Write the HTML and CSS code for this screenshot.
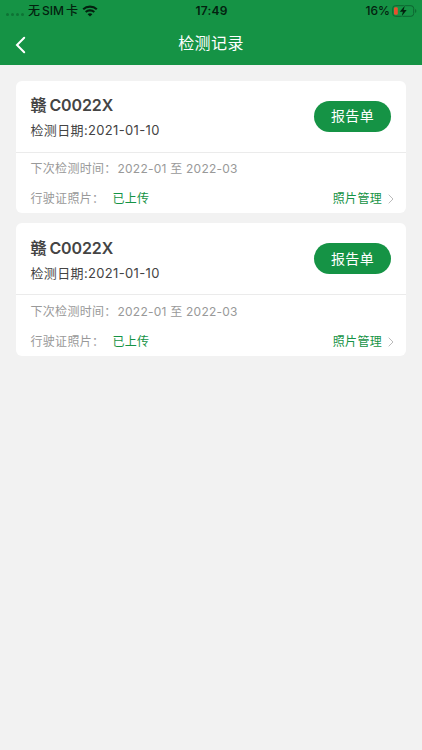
FILE: index.html
```html
<!DOCTYPE html>
<html lang="zh-CN">
<head>
    <meta charset="UTF-8">
    <meta name="viewport" content="width=device-width, initial-scale=1.0">
    <title>检测记录</title>
    <link rel="stylesheet" href="styles.css">
</head>
<body>
    <header class="header">
        <div class="status-bar">
            <div class="status-left">
                <span class="signal"><i></i><i></i><i></i><i></i></span>
                <span class="carrier"><span>无</span><span>SIM</span><span>卡</span></span>
                <svg class="wifi" width="16" height="12" viewBox="0 0 16 12">
                    <path d="M1.2 4.3C5 .7 11 .7 14.8 4.3M3.7 7.1c2.4-2.3 6.2-2.3 8.6 0" fill="none" stroke="#03210f" stroke-width="2.1"/>
                    <path d="M8 11.6 5.6 9.2c1.3-1.3 3.5-1.3 4.8 0z" fill="#03210f"/>
                </svg>
            </div>
            <span class="time">17:49</span>
            <div class="status-right">
                <span class="percent">16%</span>
                <svg class="battery" width="25" height="12" viewBox="0 0 25 12">
                    <rect x=".7" y=".7" width="21" height="10.6" rx="2.8" fill="none" stroke="#0d6430"/>
                    <path d="M23.2 4v4c1.5-.6 1.5-3.4 0-4z" fill="#0d6430"/>
                    <rect x="2" y="2.2" width="3.8" height="7.6" rx="1.2" fill="#e8502f"/>
                    <path d="M12.8.8 7.8 6.7h3.1l-1.2 4.5 5-6.1h-3.1z" fill="#03210f" stroke="#159345" stroke-width="1.6" paint-order="stroke"/>
                </svg>
            </div>
        </div>
        <nav class="nav-bar">
            <a class="back" href="#" aria-label="返回">
                <svg width="11" height="18" viewBox="0 0 11 18">
                    <path d="M9.2 1.8 2 9l7.2 7.2" fill="none" stroke="#fff" stroke-width="2" stroke-linecap="round"/>
                </svg>
            </a>
            <h1>检测记录</h1>
        </nav>
    </header>

    <main class="list">
        <section class="card">
            <div class="card-top">
                <div class="car-info">
                    <h2><span>赣</span>C0022X</h2>
                    <p class="date">检测日期:2021-01-10</p>
                </div>
                <button class="report-button">报告单</button>
            </div>
            <div class="card-bottom">
                <div class="row">
                    <span class="label">下次检测时间：</span>
                    <span class="range">2022-01 至 2022-03</span>
                </div>
                <div class="row">
                    <span class="label">行驶证照片：</span>
                    <span class="uploaded">已上传</span>
                    <a class="manage" href="#">照片管理
                        <svg width="6" height="10" viewBox="0 0 6 10"><path d="M.7.7 5 5 .7 9.3" fill="none" stroke="#bbb"/></svg>
                    </a>
                </div>
            </div>
        </section>

        <section class="card">
            <div class="card-top">
                <div class="car-info">
                    <h2><span>赣</span>C0022X</h2>
                    <p class="date">检测日期:2021-01-10</p>
                </div>
                <button class="report-button">报告单</button>
            </div>
            <div class="card-bottom">
                <div class="row">
                    <span class="label">下次检测时间：</span>
                    <span class="range">2022-01 至 2022-03</span>
                </div>
                <div class="row">
                    <span class="label">行驶证照片：</span>
                    <span class="uploaded">已上传</span>
                    <a class="manage" href="#">照片管理
                        <svg width="6" height="10" viewBox="0 0 6 10"><path d="M.7.7 5 5 .7 9.3" fill="none" stroke="#bbb"/></svg>
                    </a>
                </div>
            </div>
        </section>
    </main>
</body>
</html>
```
FILE: styles.css
```css
* {
    box-sizing: border-box;
}

body {
    margin: 0;
    min-height: 100vh;
    background-color: #f2f2f2;
    font-family: Inter, "Noto Sans CJK SC", sans-serif;
    color: #444;
}

a {
    text-decoration: none;
}

/* Header */
.header {
    height: 65.4px;
    background-color: #159345;
}

.status-bar {
    display: grid;
    grid-template-columns: 1fr auto 1fr;
    align-items: center;
    height: 21px;
    padding: 0 5px 0 6px;
    font-size: 12px;
    font-weight: 500;
    line-height: 20px;
    color: #03210f;
}

.status-left,
.status-right {
    display: flex;
    align-items: center;
}

.status-right {
    justify-content: flex-end;
    gap: 2px;
}

.signal {
    display: flex;
    gap: 2px;
    margin: 7px 4px 0 0;
}

.signal i {
    width: 3px;
    height: 3px;
    border-radius: 50%;
    background-color: #0e7335;
}

.carrier {
    display: flex;
    gap: 2px;
}

.wifi {
    margin-left: 4px;
}

.time {
    font-weight: 600;
    letter-spacing: 0.2px;
}

.nav-bar {
    display: grid;
    grid-template-columns: 1fr auto 1fr;
    align-items: center;
    height: 44px;
    padding: 0 15px;
}

.back {
    display: flex;
    padding-top: 3px;
}

.nav-bar h1 {
    margin: 0;
    font-size: 16px;
    font-weight: 400;
    line-height: 24px;
    letter-spacing: 0.4px;
    color: #fff;
}

/* Record cards */
.list {
    display: flex;
    flex-direction: column;
    gap: 10px;
    padding: 15.6px 16px 0 15.5px;
}

.card {
    height: 132.5px;
    border-radius: 6px;
    background-color: #fff;
}

.card-top {
    display: flex;
    justify-content: space-between;
    align-items: center;
    height: 72px;
    padding: 0 15px;
    border-bottom: 1px solid #ebebeb;
}

.car-info {
    padding-top: 2.6px;
}

.car-info h2 {
    display: flex;
    gap: 3px;
    margin: 0;
    font-size: 16px;
    font-weight: 600;
    line-height: 26px;
    letter-spacing: -0.1px;
}

.date {
    margin: 0;
    font-size: 13px;
    line-height: 25px;
    letter-spacing: 0.35px;
}

.report-button {
    width: 77px;
    height: 31px;
    padding: 0;
    border: none;
    border-radius: 16px;
    background-color: #159345;
    font-family: inherit;
    font-size: 14px;
    line-height: 30px;
    letter-spacing: 0.3px;
    color: #fff;
}

.card-bottom {
    padding: 1.2px 12px 0 15px;
}

.row {
    display: flex;
    align-items: center;
    height: 30px;
    font-size: 12px;
    line-height: 18px;
    letter-spacing: 0.3px;
    color: #999;
}

.label {
    width: 87px;
    white-space: nowrap;
}

.range {
    letter-spacing: 0.23px;
}

.row .uploaded {
    margin-left: -5px;
    color: #159345;
}

.manage {
    display: flex;
    align-items: center;
    gap: 6px;
    margin-left: auto;
    color: #159345;
}
```
